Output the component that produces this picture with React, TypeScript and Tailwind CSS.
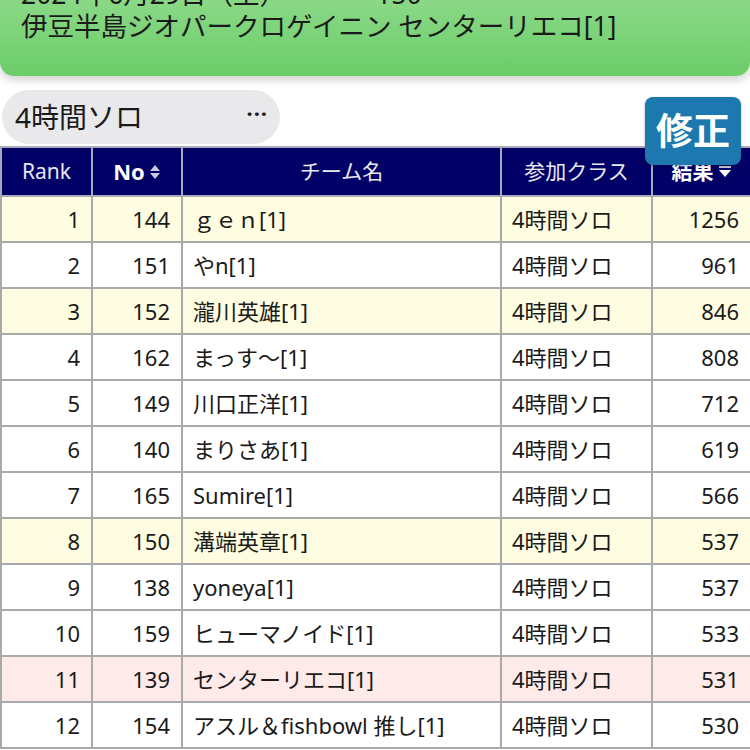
import React from 'react';

type Row = { rank: number; no: number; name: string; cls: string; result: number; tone?: 'yellow' | 'pink' };

const rows: Row[] = [
  { rank: 1, no: 144, name: 'ｇｅｎ[1]', cls: '4時間ソロ', result: 1256, tone: 'yellow' },
  { rank: 2, no: 151, name: 'やn[1]', cls: '4時間ソロ', result: 961 },
  { rank: 3, no: 152, name: '瀧川英雄[1]', cls: '4時間ソロ', result: 846, tone: 'yellow' },
  { rank: 4, no: 162, name: 'まっす〜[1]', cls: '4時間ソロ', result: 808 },
  { rank: 5, no: 149, name: '川口正洋[1]', cls: '4時間ソロ', result: 712 },
  { rank: 6, no: 140, name: 'まりさあ[1]', cls: '4時間ソロ', result: 619 },
  { rank: 7, no: 165, name: 'Sumire[1]', cls: '4時間ソロ', result: 566 },
  { rank: 8, no: 150, name: '溝端英章[1]', cls: '4時間ソロ', result: 537, tone: 'yellow' },
  { rank: 9, no: 138, name: 'yoneya[1]', cls: '4時間ソロ', result: 537 },
  { rank: 10, no: 159, name: 'ヒューマノイド[1]', cls: '4時間ソロ', result: 533 },
  { rank: 11, no: 139, name: 'センターリエコ[1]', cls: '4時間ソロ', result: 531, tone: 'pink' },
  { rank: 12, no: 154, name: 'アスル＆fishbowl 推し[1]', cls: '4時間ソロ', result: 530 },
];

const SortBoth = () => (
  <svg width="12" height="16" viewBox="0 0 12 16" className="inline-block ml-1 -mt-1">
    <path d="M6 1 L11 7 H1 Z" fill="#c8c8d8" />
    <path d="M6 15 L11 9 H1 Z" fill="#c8c8d8" />
  </svg>
);

const SortDown = () => (
  <svg width="14" height="16" viewBox="0 0 14 16" className="inline-block ml-1 -mt-1">
    <rect x="1" y="3" width="12" height="2" fill="#c8c8d8" />
    <path d="M7 14 L13 7 H1 Z" fill="#ffffff" />
  </svg>
);

export default function App() {
  const font = { fontFamily: '"Noto Sans", "Noto Sans CJK JP", sans-serif' };
  return (
    <div className="relative w-[750px] h-[750px] overflow-hidden bg-white text-[#1a1a1a]" style={font}>
      <div className="h-[76px] rounded-b-[14px] bg-gradient-to-b from-[#8ad886] to-[#6bcd68] shadow-[0_4px_8px_rgba(0,0,0,0.18)] px-[21px] overflow-hidden">
        <div className="-mt-[22px] text-[26.5px] leading-[32px] whitespace-nowrap">
          <div>2024年6月29日（土）<span className="ml-[90px]">150</span></div>
          <div>伊豆半島ジオパークロゲイニン センターリエコ[1]</div>
        </div>
      </div>

      <div className="mt-[14px] ml-[2px] w-[278px] h-[54px] rounded-full bg-[#e9e9ec] flex items-center justify-between pl-[13px] pr-[12px]">
        <span className="text-[28px]">4時間ソロ</span>
        <span className="text-[22px] font-bold tracking-[1px] -mt-2">···</span>
      </div>

      <table className="mt-[2px] w-[750px] border-collapse table-fixed text-[22px]">
        <colgroup>
          <col className="w-[91px]" />
          <col className="w-[90px]" />
          <col className="w-[319px]" />
          <col className="w-[151px]" />
          <col className="w-[99px]" />
        </colgroup>
        <thead>
          <tr className="bg-[#000066] text-white h-[49px]">
            <th className="border-2 border-[#a8a8b8] font-normal text-[21px] text-[#e8e8f0]">Rank</th>
            <th className="border-2 border-[#a8a8b8] font-bold text-[22px]">No<SortBoth /></th>
            <th className="border-2 border-[#a8a8b8] font-normal text-[21px] text-[#e8e8f0]">チーム名</th>
            <th className="border-2 border-[#a8a8b8] font-normal text-[21px] text-[#e8e8f0]">参加クラス</th>
            <th className="border-2 border-[#a8a8b8] font-bold text-[21px]">結果<SortDown /></th>
          </tr>
        </thead>
        <tbody>
          {rows.map((r) => (
            <tr
              key={r.rank}
              className={`h-[46px] ${r.tone === 'yellow' ? 'bg-[#fffde1]' : r.tone === 'pink' ? 'bg-[#ffeaea]' : 'bg-white'}`}
            >
              <td className="border-2 border-[#a9a9a9] text-right pr-[11px]">{r.rank}</td>
              <td className="border-2 border-[#a9a9a9] text-right pr-[11px]">{r.no}</td>
              <td className="border-2 border-[#a9a9a9] text-left pl-[10px] whitespace-nowrap">{r.name}</td>
              <td className="border-2 border-[#a9a9a9] text-left pl-[10px]">{r.cls}</td>
              <td className="border-2 border-[#a9a9a9] text-right pr-[11px]">{r.result}</td>
            </tr>
          ))}
        </tbody>
      </table>

      <button className="absolute right-[9px] top-[97px] w-[96px] h-[68px] rounded-[8px] bg-[#1c78ae] text-white text-[37px] font-bold flex items-center justify-center shadow-[0_1px_3px_rgba(0,0,0,0.3)]">
        修正
      </button>
    </div>
  );
}
